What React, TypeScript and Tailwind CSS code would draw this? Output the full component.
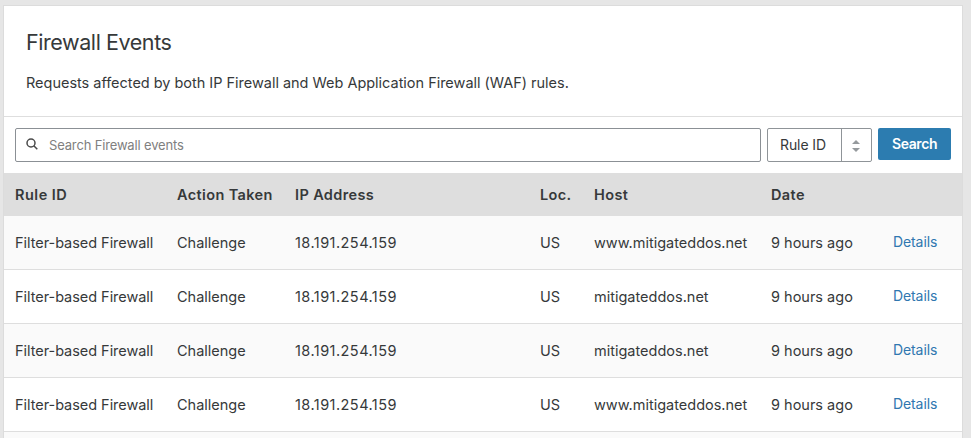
const rows = [
  "www.mitigateddos.net",
  "mitigateddos.net",
  "mitigateddos.net",
  "www.mitigateddos.net",
];
const grid = "grid grid-cols-[162px_118px_245px_54px_177px_122px_1fr] items-center pl-[11px]";

export default function App() {
  return (
    <div className="h-[438px] w-[971px] overflow-hidden bg-[#e6e6e6] pl-[3px] pt-[5px] font-['Inter',sans-serif] text-[15px] text-[#36393a]">
      <main className="h-[450px] w-[960px] border border-[#dcdcdc] bg-white">
        <header className="h-[111px] border-b border-[#dedede] px-[22px] pt-[21px]">
          <h1 className="text-[21.5px] leading-[30px] tracking-[-0.43px]">Firewall Events</h1>
          <p className="mt-[15px] text-[14.5px] leading-[22px] tracking-[-0.02px]">
            Requests affected by both IP Firewall and Web Application Firewall (WAF) rules.
          </p>
        </header>
        <div className="flex h-[56px] items-start pl-[11px] pt-[11px]">
          <label className="flex h-[34px] w-[746px] items-center rounded-[2px] border border-[#8b9095] pl-[10px]">
            <svg className="-mt-[2px] size-3" viewBox="0 0 12 12" fill="none" stroke="#4a4a4a" strokeWidth="1.5">
              <circle cx="5" cy="5" r="4" />
              <path d="m7.8 7.8 3.5 3.5" />
            </svg>
            <span className="ml-[11px] mt-[2px] text-[13px] tracking-[-0.16px] text-[#808080]">Search Firewall events</span>
          </label>
          <div className="ml-[6px] flex h-[34px] w-[105px] rounded-[2px] border border-[#8f9498]">
            <span className="flex w-[74px] items-center border-r border-[#8f9498] pb-px pl-[12px] text-[14px] tracking-[-0.1px]">Rule ID</span>
            <span className="flex flex-1 items-center justify-center pr-px pt-[2px]">
              <svg className="h-[12px] w-[8px]" viewBox="0 0 8 12" fill="#959a9d">
                <path d="M0 4 4 0l4 4zM0 8l4 4 4-4z" />
              </svg>
            </span>
          </div>
          <button className="ml-[6px] h-8 w-[73px] rounded-[2px] bg-[#2c7cb0] pb-[2px] text-[14px] font-semibold tracking-[-0.4px] text-white">Search</button>
        </div>
        <div className={`${grid} h-[43px] bg-[#dedede] text-[14.5px] font-semibold tracking-[0.38px]`}>
          <span className="tracking-[0.5px]">Rule ID</span><span>Action Taken</span><span>IP Address</span><span>Loc.</span><span>Host</span><span>Date</span>
        </div>
        {rows.map((host, i) => (
          <div key={i} className={`${grid} h-[54px] border-b border-[#dedede] text-[14.5px] ${i % 2 ? "bg-white" : "bg-[#fafafa]"}`}>
            <span className="tracking-[-0.04px]">Filter-based Firewall</span><span>Challenge</span><span className="tracking-[0.45px]">18.191.254.159</span><span>US</span><span>{host}</span><span>9 hours ago</span>
            <a className="pb-[2px] text-[14px] tracking-[-0.1px] text-[#2f77b0]">Details</a>
          </div>
        ))}
        <div className="h-[54px] bg-[#fafafa]" />
      </main>
    </div>
  );
}
